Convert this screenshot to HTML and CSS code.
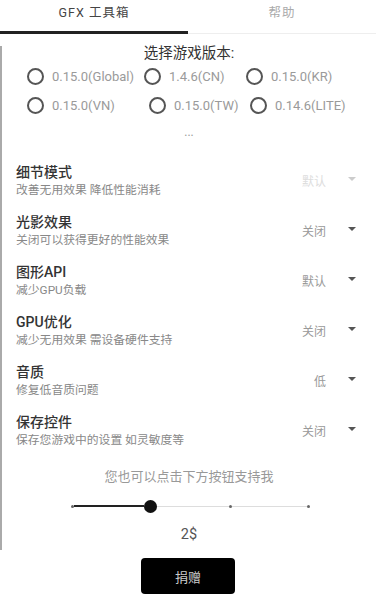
FILE: index.html
```html
<!DOCTYPE html>
<html lang="zh">
<head>
<meta charset="utf-8">
<link rel="stylesheet" href="styles.css">
</head>
<body>
<div class="tabs">
  <div class="tab active">GFX 工具箱</div>
  <div class="tab">帮助</div>
</div>
<div class="content">
  <div class="heading">选择游戏版本:</div>
  <div class="radio-row row-a">
    <div class="radio"><span class="circle"></span><span>0.15.0(Global)</span></div>
    <div class="radio"><span class="circle"></span><span>1.4.6(CN)</span></div>
    <div class="radio"><span class="circle"></span><span>0.15.0(KR)</span></div>
  </div>
  <div class="radio-row row-b">
    <div class="radio"><span class="circle"></span><span>0.15.0(VN)</span></div>
    <div class="radio"><span class="circle"></span><span>0.15.0(TW)</span></div>
    <div class="radio"><span class="circle"></span><span>0.14.6(LITE)</span></div>
  </div>
  <div class="more">...</div>
  <div class="settings">
    <div class="setting">
      <div class="text"><div class="title">细节模式</div><div class="sub">改善无用效果 降低性能消耗</div></div>
      <div class="value disabled">默认</div><span class="arrow disabled"></span>
    </div>
    <div class="setting">
      <div class="text"><div class="title">光影效果</div><div class="sub">关闭可以获得更好的性能效果</div></div>
      <div class="value">关闭</div><span class="arrow"></span>
    </div>
    <div class="setting">
      <div class="text"><div class="title">图形API</div><div class="sub">减少GPU负载</div></div>
      <div class="value">默认</div><span class="arrow"></span>
    </div>
    <div class="setting">
      <div class="text"><div class="title">GPU优化</div><div class="sub">减少无用效果 需设备硬件支持</div></div>
      <div class="value">关闭</div><span class="arrow"></span>
    </div>
    <div class="setting">
      <div class="text"><div class="title">音质</div><div class="sub">修复低音质问题</div></div>
      <div class="value">低</div><span class="arrow"></span>
    </div>
    <div class="setting">
      <div class="text"><div class="title">保存控件</div><div class="sub">保存您游戏中的设置 如灵敏度等</div></div>
      <div class="value">关闭</div><span class="arrow"></span>
    </div>
  </div>
  <div class="support">您也可以点击下方按钮支持我</div>
  <div class="slider">
    <span class="dot dark"></span>
    <span class="seg active s1"></span>
    <span class="thumb"></span>
    <span class="seg s2"></span>
    <span class="dot"></span>
    <span class="seg s3"></span>
    <span class="dot"></span>
  </div>
  <div class="price">2$</div>
</div>
<div class="actions">
  <button class="donate">捐赠</button>
</div>
</body>
</html>
```
FILE: styles.css
```css
* { box-sizing: border-box; }
html, body { margin: 0; padding: 0; background: #fff; }
body {
  width: 376px;
  font-family: "Roboto", "Noto Sans CJK SC", sans-serif;
  color: #333;
}
.tabs { display: flex; height: 34px; }
.tab {
  flex: 1;
  text-align: center;
  font-size: 12.5px;
  line-height: 26px;
  color: #aaa;
  border-bottom: 1px solid #eee;
  letter-spacing: 1px;
}
.tab.active { color: #444; border-bottom: 3px solid #222; }
.content {
  margin-top: 12px;
  border-left: 2px solid #aaa;
  padding-bottom: 6px;
}
.heading {
  text-align: center;
  font-size: 14.5px;
  line-height: 16px;
  color: #333;
}
.radio-row {
  display: grid;
  height: 29px;
  align-items: center;
  padding-left: 25px;
}
.row-a { grid-template-columns: 117px 102px auto; }
.row-b { grid-template-columns: 122px 101px auto; }
.radio {
  display: flex;
  align-items: center;
  gap: 8px;
  font-size: 13px;
  color: #9a9a9a;
  white-space: nowrap;
}
.circle {
  width: 17px;
  height: 17px;
  border: 2px solid #555;
  border-radius: 50%;
  flex: none;
}
.more {
  text-align: center;
  font-size: 12px;
  line-height: 16px;
  color: #999;
  margin-top: 4px;
}
.settings { margin-top: 16px; }
.setting {
  display: flex;
  align-items: center;
  height: 50px;
  padding: 0 20px 0 14px;
}
.text { flex: 1; }
.title { font-size: 14px; line-height: 18px; color: #333; font-weight: 500; }
.sub { font-size: 11.8px; line-height: 17px; color: #888; margin-top: 1px; }
.value { font-size: 12px; color: #999; margin-right: 22px; margin-top: -2px; }
.value.disabled { color: #ddd; }
.arrow {
  width: 0; height: 0;
  border-left: 4px solid transparent;
  border-right: 4px solid transparent;
  border-top: 4px solid #555;
  margin-top: -4px;
}
.arrow.disabled { border-top-color: #ccc; }
.support {
  text-align: center;
  font-size: 13px;
  line-height: 18px;
  color: #999;
  margin-top: 12px;
}
.slider {
  display: flex;
  align-items: center;
  height: 20px;
  margin: 10px 0 0 69px;
}
.dot { width: 3px; height: 3px; border-radius: 50%; background: #666; flex: none; }
.seg { height: 1px; background: #ddd; flex: none; }
.seg.active { height: 2px; background: #222; }
.s1 { width: 70px; }
.s2 { width: 72px; }
.s3 { width: 75px; }
.thumb { width: 13px; height: 13px; border-radius: 50%; background: #111; flex: none; }
.price {
  text-align: center;
  font-size: 14.5px;
  line-height: 18px;
  color: #555;
  margin-top: 10px;
}
.actions { display: flex; justify-content: center; margin-top: 8px; }
.donate {
  width: 94px;
  height: 36px;
  background: #000;
  color: #ccc;
  border: none;
  border-radius: 4px;
  font-family: "Noto Sans CJK SC", sans-serif;
  font-size: 13px;
}
```
